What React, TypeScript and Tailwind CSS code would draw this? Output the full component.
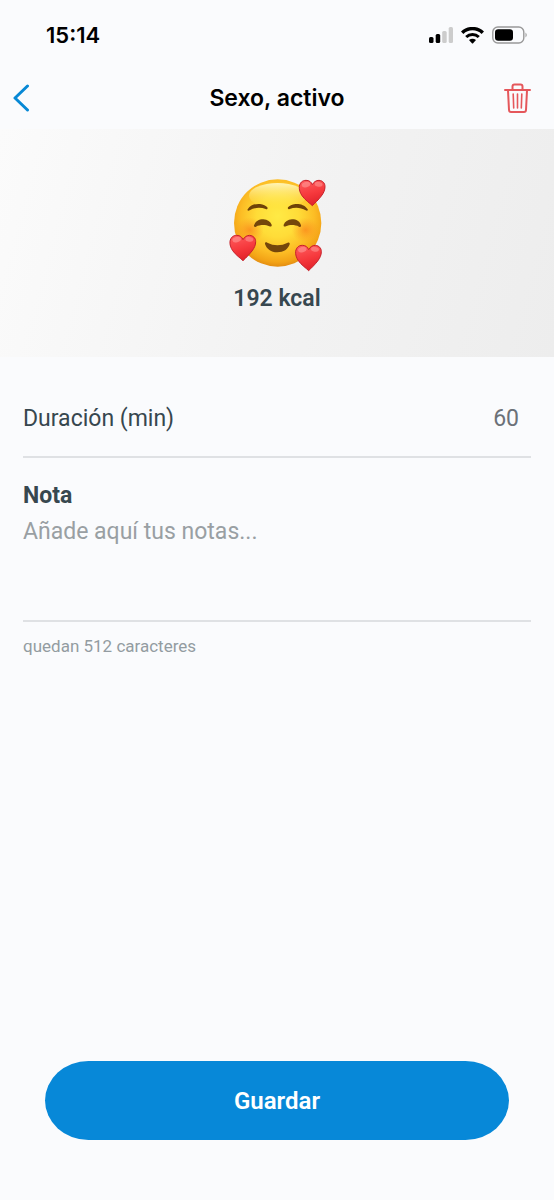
import { useState } from "react";

const MAX_NOTE = 512;

function StatusBar() {
    return (
        <div className="flex h-[70px] items-center justify-between pl-[46px] pr-[26px] text-black">
            <span className="font-['Inter'] text-[22px] leading-7 font-semibold">15:14</span>

            <div className="flex items-center gap-2">
                {/* Signal */}
                <svg className="h-4 w-6" viewBox="0 0 24 16" aria-hidden="true">
                    <rect x="0" y="10" width="4.5" height="6" rx="1.5" fill="#000" />
                    <rect x="6.7" y="7" width="4.5" height="9" rx="1.5" fill="#000" />
                    <rect x="13.2" y="4" width="4.5" height="12" rx="1.5" fill="#ccc" />
                    <rect x="19.7" y="0" width="4.3" height="16" rx="1.5" fill="#ccc" />
                </svg>
                {/* Wifi */}
                <svg className="h-[17px] w-[23px]" viewBox="0 0 23 17" aria-hidden="true">
                    <path d="M1.2 5.8A14.6 14.6 0 0 1 21.8 5.8" fill="none" stroke="#000" strokeWidth="3.4" />
                    <path d="M5.2 10A9 9 0 0 1 17.8 10" fill="none" stroke="#000" strokeWidth="3" />
                    <path d="M8 13.1Q11.5 10.3 15 13.1L12.1 16.3Q11.5 16.9 10.9 16.3Z" fill="#000" />
                </svg>
                {/* Battery */}
                <svg className="h-[18px] w-9" viewBox="0 0 36 18" aria-hidden="true">
                    <rect x="0.8" y="1" width="31" height="16" rx="5" fill="none" stroke="#999" strokeWidth="1.4" />
                    <rect x="3" y="3.2" width="18" height="11.6" rx="3.2" fill="#000" />
                    <path d="M33.5 6.5Q36 9 33.5 11.5Z" fill="#999" />
                </svg>
            </div>
        </div>
    );
}

function Heart({ x, y }: { x: number; y: number }) {
    return (
        <g transform={`translate(${x} ${y})`}>
            <path
                d="M0 38C-7 31-22 21-31 8C-37-1-40-10-39-20C-37-31-30-38-19-38C-9-38-3-33 0-25C4-33 11-38 20-38C31-37 38-30 38-19C38-9 34 0 27 9C18 21 7 31 0 38Z"
                fill="url(#heart)"
                stroke="#c5202a"
                strokeWidth="3"
            />
            <ellipse cx="-19" cy="-25" rx="13" ry="8" fill="#ff9a98" opacity="0.6" transform="rotate(-15 -19 -25)" />
            <ellipse cx="19" cy="-26" rx="12" ry="7" fill="#ff9a98" opacity="0.55" transform="rotate(10 19 -26)" />
        </g>
    );
}

function LovedFace() {
    return (
        <svg className="h-24 w-[100px]" viewBox="30 36 300 288" role="img" aria-label="Cara sonriente con corazones">
            <defs>
                <radialGradient id="face" cx="0.5" cy="0.42" r="0.6">
                    <stop offset="0" stopColor="#ffea45" />
                    <stop offset="0.4" stopColor="#ffdc38" />
                    <stop offset="0.7" stopColor="#fcbd25" />
                    <stop offset="0.88" stopColor="#f3a316" />
                    <stop offset="1" stopColor="#dd8510" />
                </radialGradient>
                <radialGradient id="blush">
                    <stop offset="0" stopColor="#fb8a1c" stopOpacity="0.8" />
                    <stop offset="1" stopColor="#fb9a22" stopOpacity="0" />
                </radialGradient>
                <linearGradient id="shine" x1="0" y1="0" x2="0" y2="1">
                    <stop offset="0" stopColor="#fffac8" stopOpacity="0.9" />
                    <stop offset="1" stopColor="#ffea45" stopOpacity="0" />
                </linearGradient>
                <linearGradient id="heart" x1="0" y1="0" x2="0.3" y2="1">
                    <stop offset="0" stopColor="#ff5f60" />
                    <stop offset="0.6" stopColor="#f6393d" />
                    <stop offset="1" stopColor="#e3242c" />
                </linearGradient>
            </defs>
            <circle cx="182" cy="174" r="131" fill="url(#face)" />
            <ellipse cx="182" cy="92" rx="86" ry="38" fill="url(#shine)" />
            <ellipse cx="98" cy="195" rx="42" ry="38" fill="url(#blush)" />
            <ellipse cx="266" cy="195" rx="42" ry="38" fill="url(#blush)" />
            <g fill="#6f4208">
                <path d="M92 133C101 119 116 116 129 117C139 118 147 122 151 127C153 131 150 134 146 132C131 126 112 127 98 136C94 138 90 137 92 133Z" />
                <path d="M272 133C263 119 248 116 235 117C225 118 217 122 213 127C211 131 214 134 218 132C233 126 252 127 266 136C270 138 274 137 272 133Z" />
            </g>
            <g fill="#74460b">
                <path d="M111 181C116 168 125 163 139 163C152 164 160 170 164 179C165 184 162 186 157 184C146 179 129 179 117 185C113 187 110 185 111 181Z" />
                <path d="M200 179C204 170 212 164 225 163C239 163 248 168 252 181C253 185 250 187 246 185C234 179 218 179 207 184C202 186 199 184 200 179Z" />
                <path d="M144 237C143 232 147 231 151 233C170 243 193 243 212 233C216 231 219 233 218 238C213 253 200 262 181 262C162 262 149 252 144 237Z" />
            </g>
            <Heart x={286} y={84} />
            <Heart x={78} y={249} />
            <Heart x={275} y={279} />
        </svg>
    );
}

export default function App() {
    const [duration, setDuration] = useState("60");
    const [note, setNote] = useState("");

    return (
        <main className="flex min-h-screen w-full flex-col bg-[#fafbfd] font-['Roboto',sans-serif] text-[#37474f]">
            <StatusBar />

            <header className="grid h-[59px] grid-cols-[1fr_auto_1fr] items-center px-3 pb-1">
                <button type="button" aria-label="Volver" className="justify-self-start">
                    <svg className="h-7 w-[18px]" viewBox="0 0 18 28" fill="none" stroke="#0788d5" strokeWidth="3" strokeLinecap="round" strokeLinejoin="round">
                        <path d="M15.5 2L3 14L15.5 26" />
                    </svg>
                </button>
                <h1 className="font-['Inter'] text-[23px] leading-7 font-semibold text-black">Sexo, activo</h1>
                <button type="button" aria-label="Eliminar" className="justify-self-end pr-[11px]">
                    <svg className="h-[30px] w-[27px]" viewBox="0 0 27 30" fill="none" stroke="#e5575b" strokeWidth="2" strokeLinecap="round" strokeLinejoin="round">
                        <path d="M1 7H26" />
                        <path d="M8.5 6.5V3.5Q8.5 1.5 10.5 1.5H16.5Q18.5 1.5 18.5 3.5V6.5" />
                        <path d="M4 7.5L5 27Q5.1 29 7 29H20Q21.9 29 22 27L23 7.5" />
                        <path d="M9.2 11L9.7 25M13.5 11V25M17.8 11L17.3 25" strokeWidth="1.6" />
                    </svg>
                </button>
            </header>

            <section className="flex h-[228px] flex-col items-center bg-linear-[105deg] from-[#fbfbfb] via-[#f3f3f3] to-[#ededed] pt-12">
                <LovedFace />
                <p className="mt-3 text-[23px] leading-7 font-semibold">192 kcal</p>
            </section>

            <form className="flex flex-1 flex-col" onSubmit={(e) => e.preventDefault()}>
                <div className="flex flex-col px-[23px]">
                    <div className="flex h-[101px] items-center justify-between border-b-2 border-[#dfe1e4] pt-6 pr-3">
                        <label htmlFor="duration" className="text-[23px] leading-7">Duración (min)</label>
                        <input
                            id="duration"
                            inputMode="numeric"
                            value={duration}
                            onChange={(e) => setDuration(e.target.value)}
                            className="w-24 bg-transparent text-right text-[23px] leading-7 text-[#6b7178] outline-none"
                        />
                    </div>

                    <label htmlFor="note" className="mt-6 text-[23px] leading-7 font-bold">Nota</label>
                    <textarea
                        id="note"
                        maxLength={MAX_NOTE}
                        value={note}
                        onChange={(e) => setNote(e.target.value)}
                        placeholder="Añade aquí tus notas..."
                        className="mt-2 h-[104px] resize-none border-b-2 border-[#dfe1e4] bg-transparent text-[23px] leading-7 outline-none placeholder:text-[#999fa3]"
                    />
                    <p className="mt-3 text-[17px] leading-6 text-[#939ca1]">quedan {MAX_NOTE - note.length} caracteres</p>
                </div>

                <div className="mt-auto px-[45px] pb-[60px]">
                    <button type="submit" className="h-[79px] w-full rounded-[44px/40px] bg-[#0788d8] text-2xl font-semibold text-white">
                        Guardar
                    </button>
                </div>
            </form>
        </main>
    );
}
